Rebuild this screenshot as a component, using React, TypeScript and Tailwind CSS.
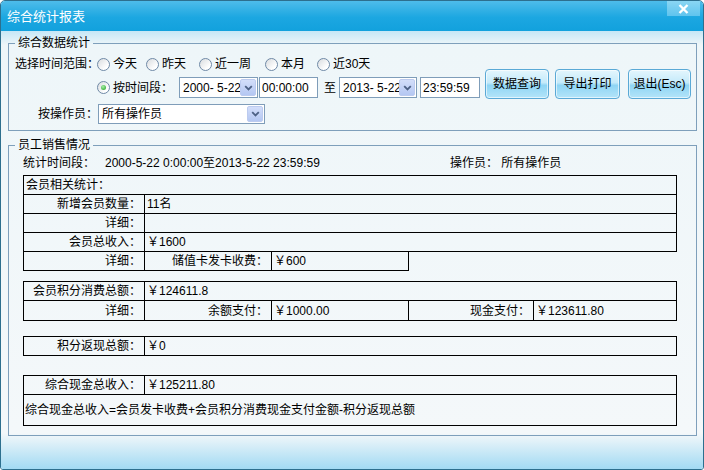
import React from "react";

// little pieces of the old WinForms look
const Radio = ({ checked }: { checked?: boolean }) => (
  <span className="flex h-[13px] w-[13px] shrink-0 items-center justify-center rounded-full border border-[#6f89a6] bg-[linear-gradient(135deg,#d9dcdf,#ffffff_75%)]">
    {checked && (
      <span className="h-[5px] w-[5px] rounded-full bg-[radial-gradient(circle_at_40%_35%,#a8eea8,#1a9f1a)]" />
    )}
  </span>
);

const RadioItem = ({ label, className }: { label: string; className?: string }) => (
  <span className={`flex items-center gap-[3px] ${className ?? ""}`}>
    <Radio />
    <span>{label}</span>
  </span>
);

const DropArrow = () => (
  <span className="flex h-full w-[16px] shrink-0 items-center justify-center rounded-[2px] border border-[#bccbef] bg-[linear-gradient(to_bottom,#d3defa,#b4c7f2)]">
    <svg width="9" height="6" viewBox="0 0 9 6">
      <path d="M1.2 1.2 L4.5 4.5 L7.8 1.2" stroke="#4d6185" strokeWidth="1.8" fill="none" />
    </svg>
  </span>
);

const Combo = ({ value, className }: { value: string; className?: string }) => (
  <div className={`flex items-center border border-[#7f9db9] bg-white p-[1px] ${className ?? ""}`}>
    <span className="flex-1 overflow-hidden whitespace-pre pl-[2px] leading-[14px]">{value}</span>
    <DropArrow />
  </div>
);

const TimeBox = ({ value, className }: { value: string; className?: string }) => (
  <div className={`flex h-[21px] items-center border border-[#7f9db9] bg-white pl-[2px] ${className ?? ""}`}>
    {value}
  </div>
);

const Button = ({ label, className }: { label: string; className?: string }) => (
  <div
    className={`flex h-[30px] items-center justify-center rounded-[4px] border border-[#5aa9d6] bg-[linear-gradient(to_bottom,#e4f6fd_0%,#c4eafa_45%,#8fd5f4_55%,#b3e4f9_100%)] shadow-[inset_0_0_0_1px_rgba(255,255,255,0.6)] ${className ?? ""}`}
  >
    {label}
  </div>
);

const Label = ({ children }: { children: React.ReactNode }) => (
  <td className="border border-black pr-[3px] text-right whitespace-pre">{children}</td>
);

const Val = ({ children, span }: { children?: React.ReactNode; span?: number }) => (
  <td colSpan={span} className="border border-black pl-[2px] text-left whitespace-pre">
    {children}
  </td>
);

const Sheet = ({ children, className }: { children: React.ReactNode; className?: string }) => (
  <table className={`ml-[14px] w-[654px] table-fixed border-collapse ${className ?? ""}`}>
    <colgroup>
      <col className="w-[121px]" />
      <col className="w-[127px]" />
      <col className="w-[137px]" />
      <col className="w-[125px]" />
      <col />
    </colgroup>
    <tbody>{children}</tbody>
  </table>
);

export default function App() {
  return (
    <div className="flex h-[470px] w-[704px] flex-col overflow-hidden whitespace-nowrap rounded-t-[5px] rounded-b-[3px] border border-[#2d6f8e] font-['Liberation_Sans','Noto_Sans_CJK_SC',sans-serif] text-[12px] leading-[14px] text-black">
      {/* title bar */}
      <div className="flex h-[30px] shrink-0 items-start justify-between bg-[linear-gradient(to_bottom,#4ebcea,#1ca7e1_55%,#12a1dd)]">
        <span className="pl-[6px] pt-[8px] text-[13px] leading-[15px] text-white">综合统计报表</span>
        <span className="mr-[3px] flex h-[15px] w-[33px] items-center justify-center bg-[linear-gradient(to_bottom,#8ad6f3,#5fc4ee)]">
          <svg width="11" height="10" viewBox="0 0 11 10">
            <path d="M1.5 1 L9.5 9 M9.5 1 L1.5 9" stroke="white" strokeWidth="2.4" />
          </svg>
        </span>
      </div>

      {/* body */}
      <div className="flex flex-1 flex-col bg-[linear-gradient(to_bottom,#c6e7f6_0px,#eef6f9_14px,#f4f8fa_402px,#a2daf3_100%)] pl-[7px] pr-[6px]">
        <fieldset className="mt-[5px] border border-[#7e9fbb] pb-[6px]">
          <legend className="ml-[6px] px-[3px] leading-[14px]">综合数据统计</legend>

          <div className="mt-[4px] flex h-[20px] items-center pl-[6px]">
            <span className="w-[82px] shrink-0">选择时间范围：</span>
            <RadioItem label="今天" className="w-[49px]" />
            <RadioItem label="昨天" className="w-[53px]" />
            <RadioItem label="近一周" className="w-[66px]" />
            <RadioItem label="本月" className="w-[52px]" />
            <RadioItem label="近30天" />
          </div>

          <div className="mt-[3px] flex h-[21px] items-center pl-[88px]">
            <Radio checked />
            <span className="ml-[3px] w-[66px] shrink-0">按时间段：</span>
            <Combo value="2000- 5-22" className="h-[21px] w-[79px]" />
            <TimeBox value="00:00:00" className="ml-[1px] w-[59px]" />
            <span className="w-[21px] shrink-0 pl-[6px]">至</span>
            <Combo value="2013- 5-22" className="h-[21px] w-[78px]" />
            <TimeBox value="23:59:59" className="ml-[3px] w-[60px]" />
            <div className="mb-[7px] ml-[5px] flex">
              <Button label="数据查询" className="w-[64px]" />
              <Button label="导出打印" className="ml-[6px] w-[65px]" />
              <Button label="退出(Esc)" className="ml-[8px] w-[63px]" />
            </div>
          </div>

          <div className="mt-[6px] flex h-[20px] items-center pl-[29px]">
            <span className="w-[60px] shrink-0">按操作员：</span>
            <Combo value="所有操作员" className="h-[20px] w-[167px]" />
          </div>
        </fieldset>

        <fieldset className="mt-[7px] border border-[#7e9fbb] pb-[9px]">
          <legend className="ml-[6px] px-[3px] leading-[14px]">员工销售情况</legend>

          <div className="mt-[4px] flex h-[14px] items-center pl-[14px]">
            <span className="w-[82px] shrink-0">统计时间段：</span>
            <span className="w-[345px] shrink-0 whitespace-pre">2000-5-22 0:00:00至2013-5-22 23:59:59</span>
            <span className="whitespace-pre">操作员： 所有操作员</span>
          </div>

          <Sheet className="mt-[5px]">
            <tr className="h-[19px]">
              <td colSpan={5} className="border border-black pl-[2px]">会员相关统计：</td>
            </tr>
            <tr className="h-[19px]">
              <Label>新增会员数量：</Label>
              <Val span={4}>11名</Val>
            </tr>
            <tr className="h-[19px]">
              <Label>详细：</Label>
              <Val span={4} />
            </tr>
            <tr className="h-[19px]">
              <Label>会员总收入：</Label>
              <Val span={4}>￥1600</Val>
            </tr>
            <tr className="h-[19px]">
              <Label>详细：</Label>
              <Label>储值卡发卡收费：</Label>
              <Val>￥600</Val>
              <td colSpan={2} />
            </tr>
          </Sheet>

          <Sheet className="mt-[10px]">
            <tr className="h-[19px]">
              <Label>会员积分消费总额：</Label>
              <Val span={4}>￥124611.8</Val>
            </tr>
            <tr className="h-[20px]">
              <Label>详细：</Label>
              <Label>余额支付：</Label>
              <Val>￥1000.00</Val>
              <Label>现金支付：</Label>
              <Val>￥123611.80</Val>
            </tr>
          </Sheet>

          <Sheet className="mt-[15px]">
            <tr className="h-[19px]">
              <Label>积分返现总额：</Label>
              <Val span={4}>￥0</Val>
            </tr>
          </Sheet>

          <Sheet className="mt-[19px]">
            <tr className="h-[19px]">
              <Label>综合现金总收入：</Label>
              <Val span={4}>￥125211.80</Val>
            </tr>
            <tr className="h-[31px]">
              <td colSpan={5} className="border border-black pl-[1px]">
                综合现金总收入=会员发卡收费+会员积分消费现金支付金额-积分返现总额
              </td>
            </tr>
          </Sheet>
        </fieldset>
      </div>
    </div>
  );
}
